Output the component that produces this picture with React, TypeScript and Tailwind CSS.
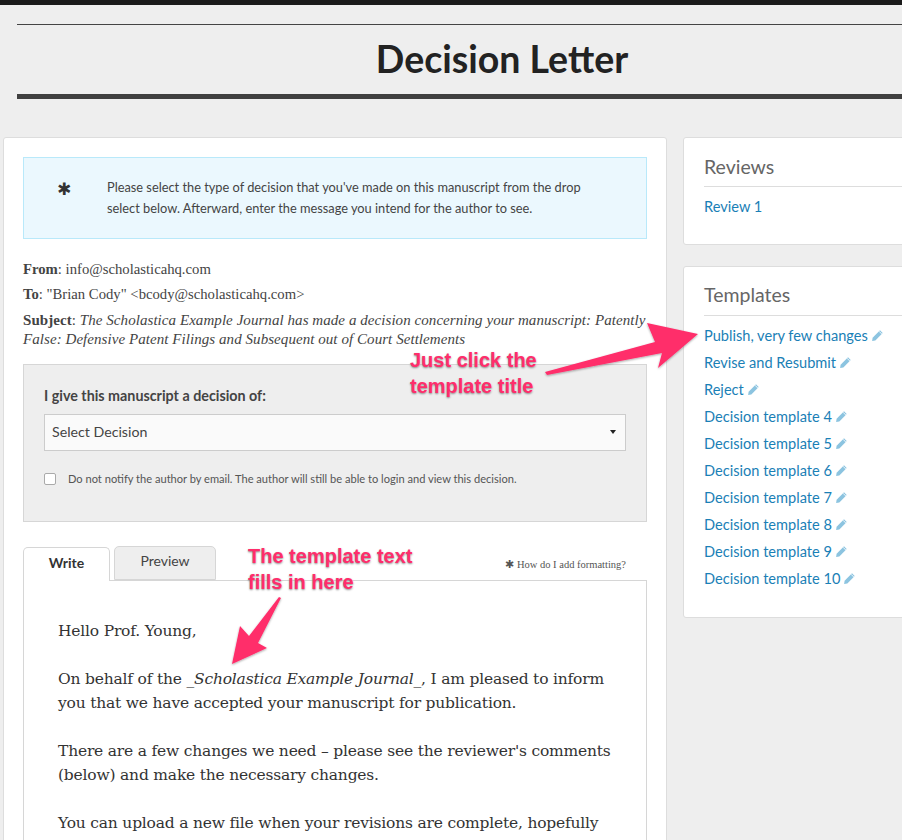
import React from 'react';

const templates = [
  'Publish, very few changes',
  'Revise and Resubmit',
  'Reject',
  'Decision template 4',
  'Decision template 5',
  'Decision template 6',
  'Decision template 7',
  'Decision template 8',
  'Decision template 9',
  'Decision template 10',
];

const Pencil = () => (
  <svg viewBox="0 0 12 12" className="w-[13px] h-[13px] ml-[3px] mt-[-1px] shrink-0">
    <path d="M8.3 1.2 10.8 3.7 4 10.5 1 11 1.5 8Z" fill="#8cc4e0" />
    <path d="M7.4 2.1 9.9 4.6" stroke="#fff" strokeWidth="0.8" />
  </svg>
);

const Note = ({ children, className }: { children: React.ReactNode; className: string }) => (
  <div
    className={`absolute font-['Liberation_Sans',sans-serif] font-bold text-[20px] leading-[26px] text-[#ff2d6b] [text-shadow:0_1px_2px_rgba(0,0,0,0.45),0_0_2px_#fff] ${className}`}
  >
    {children}
  </div>
);

export default function App() {
  return (
    <div className="relative w-[902px] h-[840px] overflow-hidden bg-[#eeeeee] border-t-[5px] border-[#1a1a1a] font-['Lato',sans-serif]">
      <header className="ml-[17px] mt-[19px] w-[970px] border-t border-[#444444] border-b-[5px] border-b-[#3f3f3f] h-[75px] flex items-center justify-center">
        <h1 className="text-[37.5px] font-bold text-[#222222]">Decision Letter</h1>
      </header>

      <div className="flex items-start pl-[3px] mt-[38px] gap-[16px]">
        <main className="w-[664px] h-[720px] shrink-0 bg-white border border-[#dddddd] rounded-[3px] px-[19px] pt-[19px]">
          <div className="h-[82px] bg-[#ebf8fe] border border-[#b9e9fa] flex pl-[33px] pt-[19px]">
            <span className="w-[50px] text-[17px] leading-[24px] text-[#333333] font-['DejaVu_Sans',sans-serif]">✱</span>
            <p className="w-[500px] text-[12.8px] leading-[21px] text-[#444444]">
              Please select the type of decision that you've made on this manuscript from the drop<br />select below. Afterward, enter the message you intend for the author to see.
            </p>
          </div>

          <div className="mt-[18px] font-['Liberation_Serif',serif] text-[#444444]">
            <p className="text-[14.7px] leading-[24px]"><b>From</b>: info@scholasticahq.com</p>
            <p className="text-[14.7px] leading-[24px] mt-[1px]"><b>To</b>: "Brian Cody" &lt;bcody@scholasticahq.com&gt;</p>
            <p className="text-[15px] tracking-[0.06px] leading-[19px] mt-[5px] whitespace-nowrap">
              <b>Subject</b>: <i>The Scholastica Example Journal has made a decision concerning your manuscript: Patently<br />False: Defensive Patent Filings and Subsequent out of Court Settlements</i>
            </p>
          </div>

          <section className="mt-[15px] h-[158px] bg-[#eeeeee] border border-[#d6d6d6] px-[20px] pt-[22px]">
            <div className="text-[14.3px] leading-[18px] font-bold text-[#444444]">I give this manuscript a decision of:</div>
            <div className="mt-[9px] h-[37px] bg-[#fafafa] border border-[#cccccc] flex items-center justify-between pl-[7px] pr-[9px] pb-[1px] text-[14.2px] text-[#444444]">
              <span>Select Decision</span>
              <span className="w-0 h-0 border-x-[3px] border-x-transparent border-t-[4px] border-t-[#222222]" />
            </div>
            <label className="mt-[20px] flex items-center text-[11.1px] text-[#555555]">
              <span className="w-[12px] h-[12px] bg-white border border-[#aaaaaa] rounded-[2px] mr-[12px]" />
              Do not notify the author by email. The author will still be able to login and view this decision.
            </label>
          </section>

          <div className="mt-[24px] flex items-end h-[34px] relative">
            <div className="w-[87px] h-[34px] bg-white border border-[#d6d6d6] border-b-0 rounded-t-[5px] flex items-center justify-center text-[14px] font-bold text-[#333333] relative z-10 mb-[-1px] pb-[5px]">Write</div>
            <div className="ml-[4px] w-[102px] h-[34px] bg-[#eeeeee] border border-[#d6d6d6] rounded-t-[5px] flex items-center justify-center text-[14px] text-[#444444] pb-[5px]">Preview</div>
            <div className="ml-auto mr-[21px] mb-[7px] font-['Liberation_Serif',serif] text-[10.5px] text-[#555555]">✱ How do I add formatting?</div>
          </div>
          <div className="h-[300px] bg-white border border-[#d6d6d6] px-[34px] pt-[38px] font-['DejaVu_Serif',serif] text-[15.5px] tracking-[-0.2px] leading-[24px] text-[#333333] whitespace-nowrap">
            <p>Hello Prof. Young,</p>
            <p className="mt-[24px]">On behalf of the _<i>Scholastica Example Journal</i>_, I am pleased to inform<br />you that we have accepted your manuscript for publication.</p>
            <p className="mt-[24px]">There are a few changes we need – please see the reviewer's comments<br />(below) and make the necessary changes.</p>
            <p className="mt-[24px]">You can upload a new file when your revisions are complete, hopefully</p>
          </div>
        </main>

        <aside className="w-[260px] shrink-0 flex flex-col gap-[21px]">
          <div className="h-[108px] bg-white border border-[#dddddd] rounded-[3px] pl-[20px] pt-[17px]">
            <h2 className="text-[19.5px] leading-[24px] text-[#666666] border-b border-[#dddddd] pb-[7px]">Reviews</h2>
            <a className="block mt-[10px] text-[14.6px] leading-[20px] text-[#1a80b6]">Review 1</a>
          </div>
          <div className="h-[352px] bg-white border border-[#dddddd] rounded-[3px] pl-[20px] pt-[16px]">
            <h2 className="text-[19.5px] leading-[24px] text-[#666666] border-b border-[#dddddd] pb-[8px]">Templates</h2>
            <ul className="mt-[6px]">
              {templates.map((t) => (
                <li key={t} className="h-[27px] flex items-center text-[14.6px] text-[#1a80b6]">
                  {t}
                  <Pencil />
                </li>
              ))}
            </ul>
          </div>
        </aside>
      </div>

      <svg className="absolute left-0 top-[-5px] w-[902px] h-[840px] pointer-events-none" viewBox="0 0 902 840">
        <defs>
          <filter id="arrowShadow" x="-10%" y="-10%" width="120%" height="130%">
            <feDropShadow dx="0" dy="1" stdDeviation="1" floodColor="#000" floodOpacity="0.35" />
          </filter>
        </defs>
        <path d="M545 372 655 342 647 323 698 334 658 368 662 353 547 375Z" fill="#ff2d6b" filter="url(#arrowShadow)" />
        <path d="M281 598 258 643 267 648 232 664 240 626 249 636 279 597Z" fill="#ff2d6b" filter="url(#arrowShadow)" />
      </svg>

      <Note className="left-[410px] top-[342px]">Just click the<br />template title</Note>
      <Note className="left-[248px] top-[538px]">The template text<br />fills in here</Note>
    </div>
  );
}
